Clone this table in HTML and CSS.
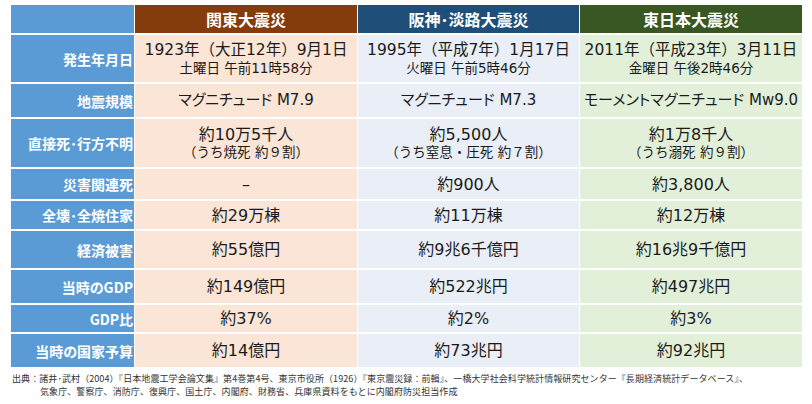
FILE: index.html
```html
<!DOCTYPE html>
<html lang="ja">
<head>
<meta charset="utf-8">
<title>関東大震災・阪神淡路大震災・東日本大震災の比較</title>
<link rel="stylesheet" href="styles.css">
</head>
<body>
<div class="table">
  <div class="hd lab"></div>
  <div class="hd h1">関東大震災</div>
  <div class="hd h2">阪神･淡路大震災</div>
  <div class="hd h3">東日本大震災</div>

  <div class="lab">発生年月日</div>
  <div class="c c1"><span class="big">1923年（大正12年）9月1日</span><span class="sm">土曜日 午前11時58分</span></div>
  <div class="c c2"><span class="big">1995年（平成7年）1月17日</span><span class="sm">火曜日 午前5時46分</span></div>
  <div class="c c3"><span class="big">2011年（平成23年）3月11日</span><span class="sm">金曜日 午後2時46分</span></div>

  <div class="lab">地震規模</div>
  <div class="c c1 kana">マグニチュード M7.9</div>
  <div class="c c2 kana">マグニチュード M7.3</div>
  <div class="c c3 kana">モーメントマグニチュード Mw9.0</div>

  <div class="lab">直接死･行方不明</div>
  <div class="c c1"><span>約10万5千人</span><span class="sm">（うち焼死 約９割）</span></div>
  <div class="c c2"><span>約5,500人</span><span class="sm">（うち窒息・圧死 約７割）</span></div>
  <div class="c c3"><span>約1万8千人</span><span class="sm">（うち溺死 約９割）</span></div>

  <div class="lab">災害関連死</div>
  <div class="c c1">–</div>
  <div class="c c2">約900人</div>
  <div class="c c3">約3,800人</div>

  <div class="lab">全壊･全焼住家</div>
  <div class="c c1">約29万棟</div>
  <div class="c c2">約11万棟</div>
  <div class="c c3">約12万棟</div>

  <div class="lab">経済被害</div>
  <div class="c c1">約55億円</div>
  <div class="c c2">約9兆6千億円</div>
  <div class="c c3">約16兆9千億円</div>

  <div class="lab">当時のGDP</div>
  <div class="c c1">約149億円</div>
  <div class="c c2">約522兆円</div>
  <div class="c c3">約497兆円</div>

  <div class="lab">GDP比</div>
  <div class="c c1">約37%</div>
  <div class="c c2">約2%</div>
  <div class="c c3">約3%</div>

  <div class="lab">当時の国家予算</div>
  <div class="c c1">約14億円</div>
  <div class="c c2">約73兆円</div>
  <div class="c c3">約92兆円</div>
</div>
<div class="source">
  <p>出典：諸井･武村（2004）『日本地震工学会論文集』第4巻第4号、東京市役所（1926）『東京震災録：前輯』、一橋大学社会科学統計情報研究センター『長期経済統計データベース』、</p>
  <p class="indent">気象庁、警察庁、消防庁、復興庁、国土庁、内閣府、財務省、兵庫県資料をもとに内閣府防災担当作成</p>
</div>
</body>
</html>
```
FILE: styles.css
```css
* { box-sizing: border-box; }
html, body { margin: 0; padding: 0; background: #ffffff; }
body {
  width: 812px;
  height: 404px;
  overflow: hidden;
  font-family: "DejaVu Sans", "Noto Sans CJK JP", sans-serif;
  color: #1a1a1a;
}
.table {
  margin: 5px 0 0 11px;
  width: 791px;
  display: grid;
  grid-template-columns: 123px 222px 221px 222px;
  grid-template-rows: 28px 47px 33px 48px 30px 28px 37px 33px 27px 33px;
  column-gap: 1px;
  row-gap: 2px;
  background: #ffffff;
}
.lab {
  background: #5b9bd5;
  color: #ffffff;
  font-family: "Noto Sans CJK JP", sans-serif;
  font-weight: 700;
  font-size: 14px;
  font-feature-settings: "palt";
  display: flex;
  align-items: center;
  justify-content: flex-end;
  padding-right: 1px;
  white-space: nowrap;
}
.hd {
  color: #ffffff;
  font-family: "Noto Sans CJK JP", sans-serif;
  font-weight: 700;
  font-size: 16px;
  display: flex;
  align-items: center;
  justify-content: center;
}
.h1 { background: #843c0c; }
.h2 { background: #1f4e79; }
.h3 { background: #385723; }
.c {
  display: flex;
  flex-direction: column;
  align-items: center;
  justify-content: center;
  font-size: 16px;
  line-height: 19px;
  white-space: nowrap;
}
.c1 { background: #fbe5d6; }
.c2 { background: #e9eef7; }
.c3 { background: #e2f0d9; }
.kana { font-feature-settings: "palt"; font-size: 15px; }
.big { font-size: 15.5px; line-height: 20px; }
.sm { font-size: 13.5px; line-height: 17px; }
.source {
  margin: 5px 0 0 12px;
  font-family: "Noto Sans CJK JP", sans-serif;
  font-size: 9px;
  line-height: 13px;
  letter-spacing: 0.08px;
  color: #333333;
}
.source p { margin: 0; white-space: nowrap; }
.source .indent { padding-left: 28px; }
```
